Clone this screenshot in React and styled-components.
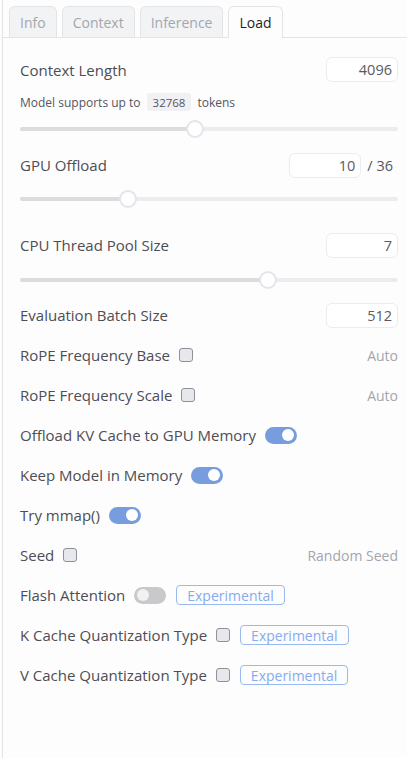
import styled, { createGlobalStyle } from "styled-components";

const Global = createGlobalStyle`
  html, body {
    margin: 0;
    padding: 0;
    background: #fdfdfd;
  }
  body {
    font-family: "Open Sans", "Noto Sans", sans-serif;
    color: #4a4a52;
  }
`;

const Panel = styled.div`
  width: 405px;
  height: 758px;
  margin-left: 2px;
  border-left: 1px solid #e3e3e3;
  box-sizing: border-box;
  background: #fdfdfd;
`;

const TabBar = styled.div`
  display: flex;
  gap: 5px;
  padding: 6px 0 0 6px;
  border-bottom: 1px solid #e4e4e7;
  height: 38px;
  box-sizing: border-box;
`;

const Tab = styled.div`
  box-sizing: border-box;
  padding: 0 10px;
  display: flex;
  align-items: center;
  font-size: 14px;
  border: 1px solid #e4e4e7;
  border-bottom: none;
  border-radius: 6px 6px 0 0;
  background: ${(p) => (p.$active ? "#fdfdfd" : "#f2f3f5")};
  color: ${(p) => (p.$active ? "#1f1f24" : "#a3a6ad")};
  margin-bottom: ${(p) => (p.$active ? "-1px" : "0")};
  height: ${(p) => (p.$active ? "32px" : "31px")};
`;

const Body = styled.div`
  padding: 18px 9px 0 17px;
  display: flex;
  flex-direction: column;
`;

const Row = styled.div`
  display: flex;
  align-items: center;
  height: ${(p) => p.$h || 40}px;
`;

const Label = styled.span`
  font-size: 15px;
  color: #4d4d55;
  margin-right: 9px;
`;

const Spacer = styled.div`
  flex: 1;
`;

const NumBox = styled.div`
  width: 72px;
  height: 25px;
  box-sizing: border-box;
  border: 1px solid #ececef;
  border-radius: 6px;
  background: #fff;
  display: flex;
  align-items: center;
  justify-content: flex-end;
  padding-right: 5px;
  font-size: 14.5px;
  color: #5a5a62;
`;

const Suffix = styled.span`
  font-size: 14.5px;
  color: #55555d;
  margin-left: 6px;
  margin-right: 5px;
`;

const Hint = styled.div`
  display: flex;
  align-items: center;
  font-size: 12px;
  color: #55555d;
  height: 24px;
  margin-top: 7px;
`;

const Code = styled.span`
  display: inline-flex;
  align-items: center;
  height: 18px;
  padding: 0 6px;
  margin: 0 6px;
  background: #f1f1f3;
  border-radius: 3px;
  font-size: 11.5px;
  color: #55555d;
`;

const Track = styled.div`
  position: relative;
  height: 4px;
  border-radius: 2px;
  background: #ececee;
  margin: ${(p) => p.$m || "0"};
`;

const Fill = styled.div`
  height: 100%;
  border-radius: 2px;
  background: #dcdcde;
`;

const Thumb = styled.div`
  position: absolute;
  top: 50%;
  width: 18px;
  height: 18px;
  box-sizing: border-box;
  border-radius: 50%;
  background: #fff;
  border: 2px solid #e3e5ec;
  transform: translate(-50%, -50%);
`;

const Muted = styled.span`
  font-size: 14px;
  color: #a3a6ad;
`;

const Box = styled.span`
  width: 14px;
  height: 14px;
  box-sizing: border-box;
  border: 1px solid #8e9199;
  border-radius: 3px;
  background: #e6e8ec;
  margin-right: 10px;
`;

const Switch = styled.span`
  position: relative;
  width: 32px;
  height: 17px;
  border-radius: 9px;
  background: ${(p) => (p.$on ? "#789ddf" : "#c9c9cc")};
  margin-right: 10px;
  &::after {
    content: "";
    position: absolute;
    top: 2.5px;
    left: ${(p) => (p.$on ? "17px" : "3px")};
    width: 12px;
    height: 12px;
    border-radius: 50%;
    background: ${(p) => (p.$on ? "#fff" : "#f1f1f3")};
  }
`;

const Badge = styled.span`
  height: 20px;
  box-sizing: border-box;
  padding: 0 10px;
  display: inline-flex;
  align-items: center;
  border: 1px solid #98b9f2;
  border-radius: 4px;
  color: #85acef;
  font-size: 14px;
`;

const Slider = ({ pct, m }) => (
  <Track $m={m}>
    <Fill style={{ width: `${pct}%` }} />
    <Thumb style={{ left: `${pct}%` }} />
  </Track>
);

export default function App() {
  return (
    <>
      <Global />
      <Panel>
        <TabBar>
          <Tab>Info</Tab>
          <Tab>Context</Tab>
          <Tab>Inference</Tab>
          <Tab $active>Load</Tab>
        </TabBar>
        <Body>
          <Row $h={27}>
            <Label>Context Length</Label>
            <Spacer />
            <NumBox>4096</NumBox>
          </Row>
          <Hint>
            Model supports up to <Code>32768</Code> tokens
          </Hint>
          <Slider pct={46.3} m="13px 0 18px" />
          <Row $h={32}>
            <Label>GPU Offload</Label>
            <Spacer />
            <NumBox>10</NumBox>
            <Suffix>/ 36</Suffix>
          </Row>
          <Slider pct={28.6} m="16px 0 28px" />
          <Row $h={32}>
            <Label>CPU Thread Pool Size</Label>
            <Spacer />
            <NumBox>7</NumBox>
          </Row>
          <Slider pct={65.6} m="17px 0 13px" />
          <Row $h={40}>
            <Label>Evaluation Batch Size</Label>
            <Spacer />
            <NumBox>512</NumBox>
          </Row>
          <Row>
            <Label>RoPE Frequency Base</Label>
            <Box />
            <Spacer />
            <Muted>Auto</Muted>
          </Row>
          <Row>
            <Label>RoPE Frequency Scale</Label>
            <Box />
            <Spacer />
            <Muted>Auto</Muted>
          </Row>
          <Row>
            <Label>Offload KV Cache to GPU Memory</Label>
            <Switch $on />
          </Row>
          <Row>
            <Label>Keep Model in Memory</Label>
            <Switch $on />
          </Row>
          <Row>
            <Label>Try mmap()</Label>
            <Switch $on />
          </Row>
          <Row>
            <Label>Seed</Label>
            <Box />
            <Spacer />
            <Muted>Random Seed</Muted>
          </Row>
          <Row>
            <Label>Flash Attention</Label>
            <Switch />
            <Badge>Experimental</Badge>
          </Row>
          <Row>
            <Label>K Cache Quantization Type</Label>
            <Box />
            <Badge>Experimental</Badge>
          </Row>
          <Row>
            <Label>V Cache Quantization Type</Label>
            <Box />
            <Badge>Experimental</Badge>
          </Row>
        </Body>
      </Panel>
    </>
  );
}
